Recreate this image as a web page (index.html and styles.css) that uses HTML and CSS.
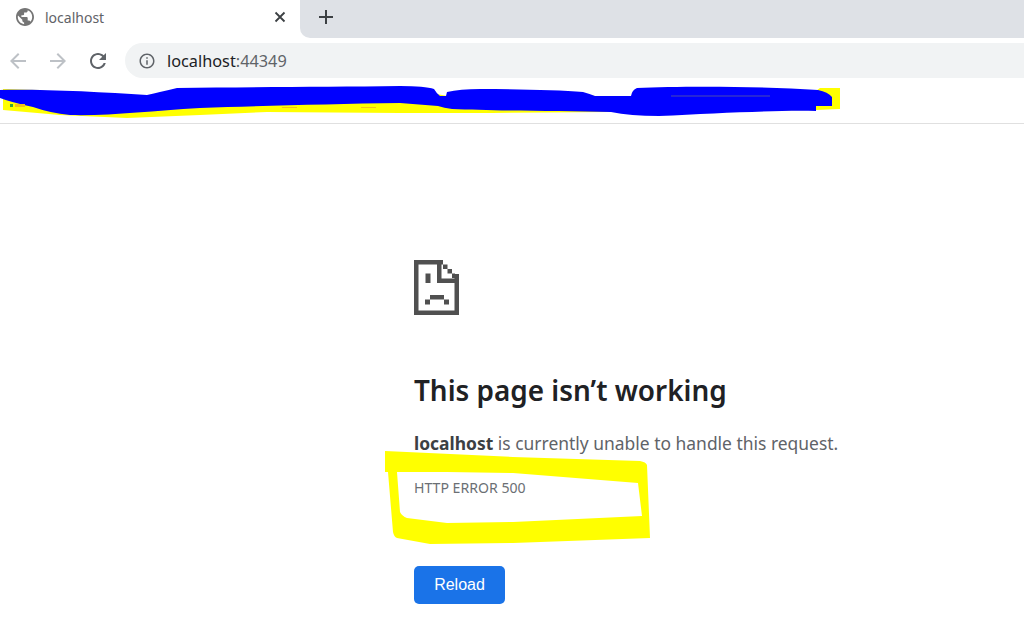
FILE: index.html
```html
<!DOCTYPE html>
<html lang="en">
<head>
<meta charset="utf-8">
<title>localhost</title>
<link rel="stylesheet" href="styles.css">
</head>
<body>
<div class="tabstrip">
  <div class="tab">
    <svg class="favicon" viewBox="2 2 20 20"><path d="M12 2C6.48 2 2 6.48 2 12s4.48 10 10 10 10-4.48 10-10S17.52 2 12 2zm-1 17.93c-3.95-.49-7-3.85-7-7.93 0-.62.08-1.21.21-1.79L9 15v1c0 1.1.9 2 2 2v1.93zm6.9-2.54c-.26-.81-1-1.39-1.9-1.39h-1v-3c0-.55-.45-1-1-1H8v-2h2c.55 0 1-.45 1-1V7h2c1.1 0 2-.9 2-2v-.41c2.93 1.19 5 4.06 5 7.41 0 2.08-.8 3.97-2.1 5.39z"/></svg>
    <span class="tab-title">localhost</span>
    <svg class="tab-close" viewBox="0 0 12 12"><path d="M1.5 1.5l9 9M10.5 1.5l-9 9"/></svg>
  </div>
  <div class="newtab-area">
    <svg class="newtab" viewBox="0 0 16 16"><path d="M8 1v14M1 8h14"/></svg>
  </div>
</div>
<div class="toolbar">
  <svg class="nav nav-off" viewBox="0 0 24 24"><path d="M20 11H7.83l5.59-5.59L12 4l-8 8 8 8 1.41-1.41L7.83 13H20v-2z"/></svg>
  <svg class="nav nav-off flip" viewBox="0 0 24 24"><path d="M20 11H7.83l5.59-5.59L12 4l-8 8 8 8 1.41-1.41L7.83 13H20v-2z"/></svg>
  <svg class="nav nav-on" viewBox="0 0 24 24"><path d="M17.65 6.35C16.2 4.9 14.21 4 12 4c-4.42 0-7.99 3.58-7.99 8s3.57 8 7.99 8c3.73 0 6.84-2.55 7.73-6h-2.08c-.82 2.33-3.04 4-5.65 4-3.31 0-6-2.69-6-6s2.69-6 6-6c1.66 0 3.14.69 4.22 1.78L13 11h7V4l-2.35 2.35z"/></svg>
  <div class="omnibox">
    <svg class="info" viewBox="0 0 24 24"><path d="M11 7h2v2h-2zm0 4h2v6h-2zm1-9C6.48 2 2 6.48 2 12s4.48 10 10 10 10-4.48 10-10S17.52 2 12 2zm0 18c-4.41 0-8-3.59-8-8s3.59-8 8-8 8 3.59 8 8-3.59 8-8 8z"/></svg>
    <span class="url">localhost<span class="port">:44349</span></span>
  </div>
</div>
<div class="bookmarks"></div>
<main class="error">
  <svg class="sad" viewBox="0 0 46 55">
    <rect x="0" y="0" width="4.5" height="55"/>
    <rect x="0" y="0" width="29" height="4.5"/>
    <rect x="0" y="50.5" width="45" height="4.5"/>
    <rect x="40.5" y="14" width="4.5" height="41"/>
    <rect x="23" y="0" width="4.5" height="23"/>
    <rect x="23" y="18.5" width="22" height="4.5"/>
    <rect x="29" y="4.5" width="4.5" height="4.5"/>
    <rect x="33.5" y="9" width="4.5" height="4.5"/>
    <rect x="38" y="13.5" width="3" height="4.5"/>
    <rect x="11.5" y="13.5" width="5" height="9.5"/>
    <rect x="16" y="35" width="14" height="4.5"/>
    <rect x="11" y="39.5" width="5" height="5"/>
    <rect x="30" y="39.5" width="5" height="5"/>
  </svg>
  <h1 class="headline">This page isn’t working</h1>
  <p class="summary"><strong>localhost</strong> is currently unable to handle this request.</p>
  <div class="code">HTTP ERROR 500</div>
  <button class="reload">Reload</button>
</main>
<svg class="scribble" viewBox="0 0 1024 635">
  <path class="yellow" d="M3 89L40 90 100 100 400 100 432 93 447 96 580 93 595 96 640 96 810 95 820 88 840 88 840 109 816 110 610 112 492 113 400 113 267 112 200 115 127 118 60 115 3 110Z"/>
  <path class="blue" d="M0 90C40 89 100 92 147 95Q160 92 177 88C250 87 330 87 400 86Q425 86 434 89Q437 94 440 96L446 96 447 92Q460 89 480 89C520 89 560 90 583 92Q590 94 595 96L631 96Q632 90 637 88C680 86 760 86 818 90Q828 92 832 97L832 106 816 106 816 111C780 110 720 113 659 116Q630 116 611 112L559 111C520 111 480 110 452 109Q444 108 438 106L400 103C330 104 260 106 200 108C150 111 110 116 70 115Q50 113 33 107Q10 102 0 98Z"/>
  <path class="trace" d="M671 96H770"/>
  <rect class="mark-green" x="10" y="104" width="3" height="3"/>
  <rect class="mark-orange" x="15" y="104" width="10" height="3"/>
  <rect class="mark-orange" x="282" y="107" width="15" height="1"/>
  <rect class="mark-orange" x="361" y="107" width="15" height="1"/>
  <path class="yellow" fill-rule="evenodd" d="M385 451L385 472 388 472 393 532Q394 537 397 538L430 544 513 543 650 538 647 465Q646 462 640 461L513 457ZM397 472L400 512Q402 516 407 518L447 523 513 522 642 516 638 483 513 473 447 472Z"/>
</svg>
</body>
</html>
```
FILE: styles.css
```css
* { box-sizing: border-box; }
html, body { margin: 0; height: 635px; overflow: hidden; background: #fff; }
body { position: relative; font-family: "Noto Sans", "Open Sans", sans-serif; }

.tabstrip { display: flex; height: 38px; }
.tab { width: 300px; display: flex; align-items: center; padding: 0 14px 4px 16px; }
.favicon { width: 18px; height: 18px; fill: #757575; flex: none; }
.tab-title { margin-left: 11px; font-size: 14px; color: #5f6368; flex: 1; }
.tab-close { width: 12px; height: 12px; stroke: #3c4043; stroke-width: 1.8; fill: none; }
.newtab-area { flex: 1; background: #dee1e6; border-bottom-left-radius: 10px; display: flex; align-items: center; padding: 0 0 4px 18px; }
.newtab { width: 16px; height: 16px; stroke: #3c4043; stroke-width: 2; fill: none; }

.toolbar { height: 46px; display: flex; align-items: center; padding: 0 0 1px 6px; }
.nav { width: 24px; height: 24px; flex: none; margin-right: 16px; }
.nav-off { fill: #bdc1c6; }
.nav-on { fill: #5f6368; }
.flip { transform: scaleX(-1); }
.omnibox { flex: 1; height: 35px; margin-left: -1px; background: #f1f3f4; border-radius: 18px 0 0 18px; display: flex; align-items: center; padding-left: 13px; }
.info { width: 18px; height: 18px; fill: #5f6368; flex: none; }
.url { margin-left: 11px; font-size: 16.3px; color: #202124; }
.port { color: #5f6368; }

.bookmarks { height: 40px; border-bottom: 1px solid #e0e0e0; }

.error { padding: 136px 0 0 414px; display: flex; flex-direction: column; align-items: flex-start; }
.sad { width: 46px; height: 55px; fill: #505050; }
.headline { margin: 57px 0 0; font-size: 27.9px; line-height: 36px; font-weight: 600; color: #202124; white-space: nowrap; }
.summary { margin: 23px 0 0; font-size: 17.45px; line-height: 24px; color: #5f6368; white-space: nowrap; }
.summary strong { color: #3c4043; font-weight: 700; }
.code { margin-top: 24px; font-size: 14.1px; line-height: 18px; color: #6b6f74; }
.reload { margin-top: 69px; width: 91px; height: 38px; border: 0; border-radius: 5px; background: #1a73e8; color: #fff; font: 16px "Liberation Sans", Arial, sans-serif; padding: 0; }

.scribble { position: absolute; left: 0; top: 0; width: 1024px; height: 635px; pointer-events: none; }
.yellow { fill: #ffff00; }
.blue { fill: #0000ff; }
.trace { stroke: #4a4ab0; stroke-width: 1; fill: none; }
.mark-green { fill: #3aa63a; }
.mark-orange { fill: #f2c21a; }
```
